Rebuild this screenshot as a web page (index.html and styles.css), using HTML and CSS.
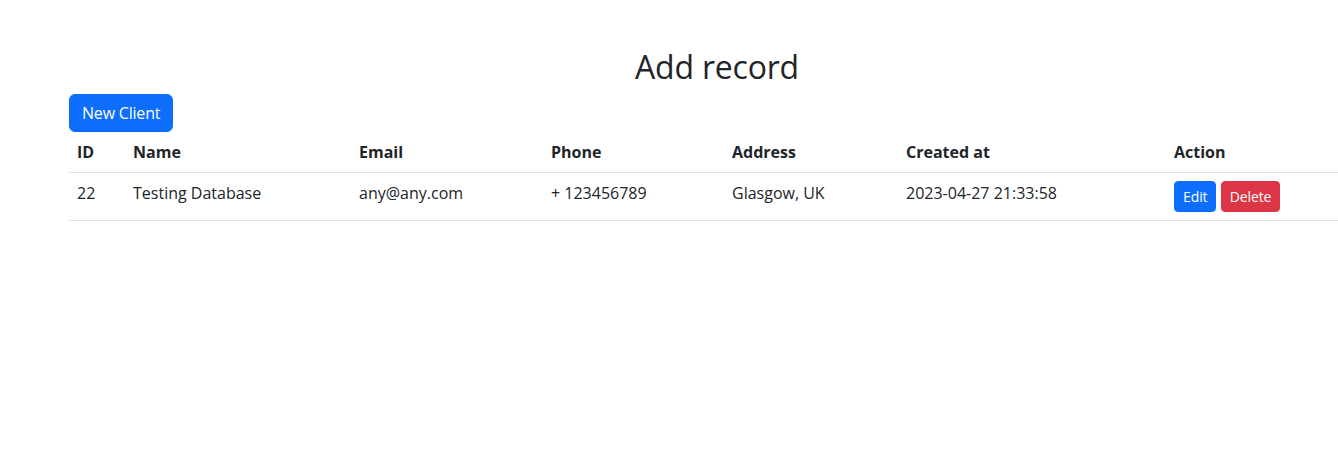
FILE: index.html
```html
<!DOCTYPE html>
<html lang="en">
<head>
<meta charset="utf-8">
<title>Add record</title>
<link rel="stylesheet" href="styles.css">
</head>
<body>
<div class="container">
  <h2 class="title">Add record</h2>
  <a class="btn btn-primary" href="#">New Client</a>
  <table class="table">
    <colgroup>
      <col class="c-id"><col class="c-name"><col class="c-email"><col class="c-phone"><col class="c-address"><col class="c-created"><col class="c-action">
    </colgroup>
    <thead>
      <tr>
        <th>ID</th><th>Name</th><th>Email</th><th>Phone</th><th>Address</th><th>Created at</th><th>Action</th>
      </tr>
    </thead>
    <tbody>
      <tr>
        <td>22</td>
        <td>Testing Database</td>
        <td>any@any.com</td>
        <td>+ 123456789</td>
        <td>Glasgow, UK</td>
        <td>2023-04-27 21:33:58</td>
        <td><a class="btn btn-sm btn-primary" href="#">Edit</a> <a class="btn btn-sm btn-danger" href="#">Delete</a></td>
      </tr>
    </tbody>
  </table>
</div>
</body>
</html>
```
FILE: styles.css
```css
html, body {
  overflow: hidden;
}
body {
  margin: 0;
  font-family: "Open Sans", "Noto Sans", sans-serif;
  font-size: 16px;
  line-height: 1.5;
  color: #212529;
  background: #fff;
}
.container {
  width: 1296px;
  margin-left: 69px;
  padding-top: 48px;
}
.title {
  margin: 0 0 8px;
  font-size: 32px;
  font-weight: 500;
  line-height: 1.2;
  text-align: center;
  letter-spacing: -0.2px;
}
.btn {
  display: inline-block;
  box-sizing: border-box;
  padding: 6px 12px;
  font-size: 16px;
  line-height: 1.5;
  border: 1px solid transparent;
  border-radius: 6px;
  text-decoration: none;
  color: #fff;
  vertical-align: middle;
  letter-spacing: -0.2px;
}
.btn-primary {
  background: #0d6efd;
  border-color: #0d6efd;
}
.btn-danger {
  background: #dc3545;
  border-color: #dc3545;
}
.btn-sm {
  padding: 4px 8px;
  font-size: 14px;
  border-radius: 4px;
  letter-spacing: -0.1px;
}
.table {
  width: 100%;
  margin-bottom: 16px;
  border-collapse: collapse;
  table-layout: fixed;
}
.table th,
.table td {
  padding: 8px;
  text-align: left;
  border-bottom: 1px solid #dee2e6;
  vertical-align: top;
}
.table th {
  font-weight: 700;
}
.c-id { width: 56px; }
.c-name { width: 226px; }
.c-email { width: 192px; }
.c-phone { width: 181px; }
.c-address { width: 174px; }
.c-created { width: 268px; }
.c-action { width: 199px; }
```
